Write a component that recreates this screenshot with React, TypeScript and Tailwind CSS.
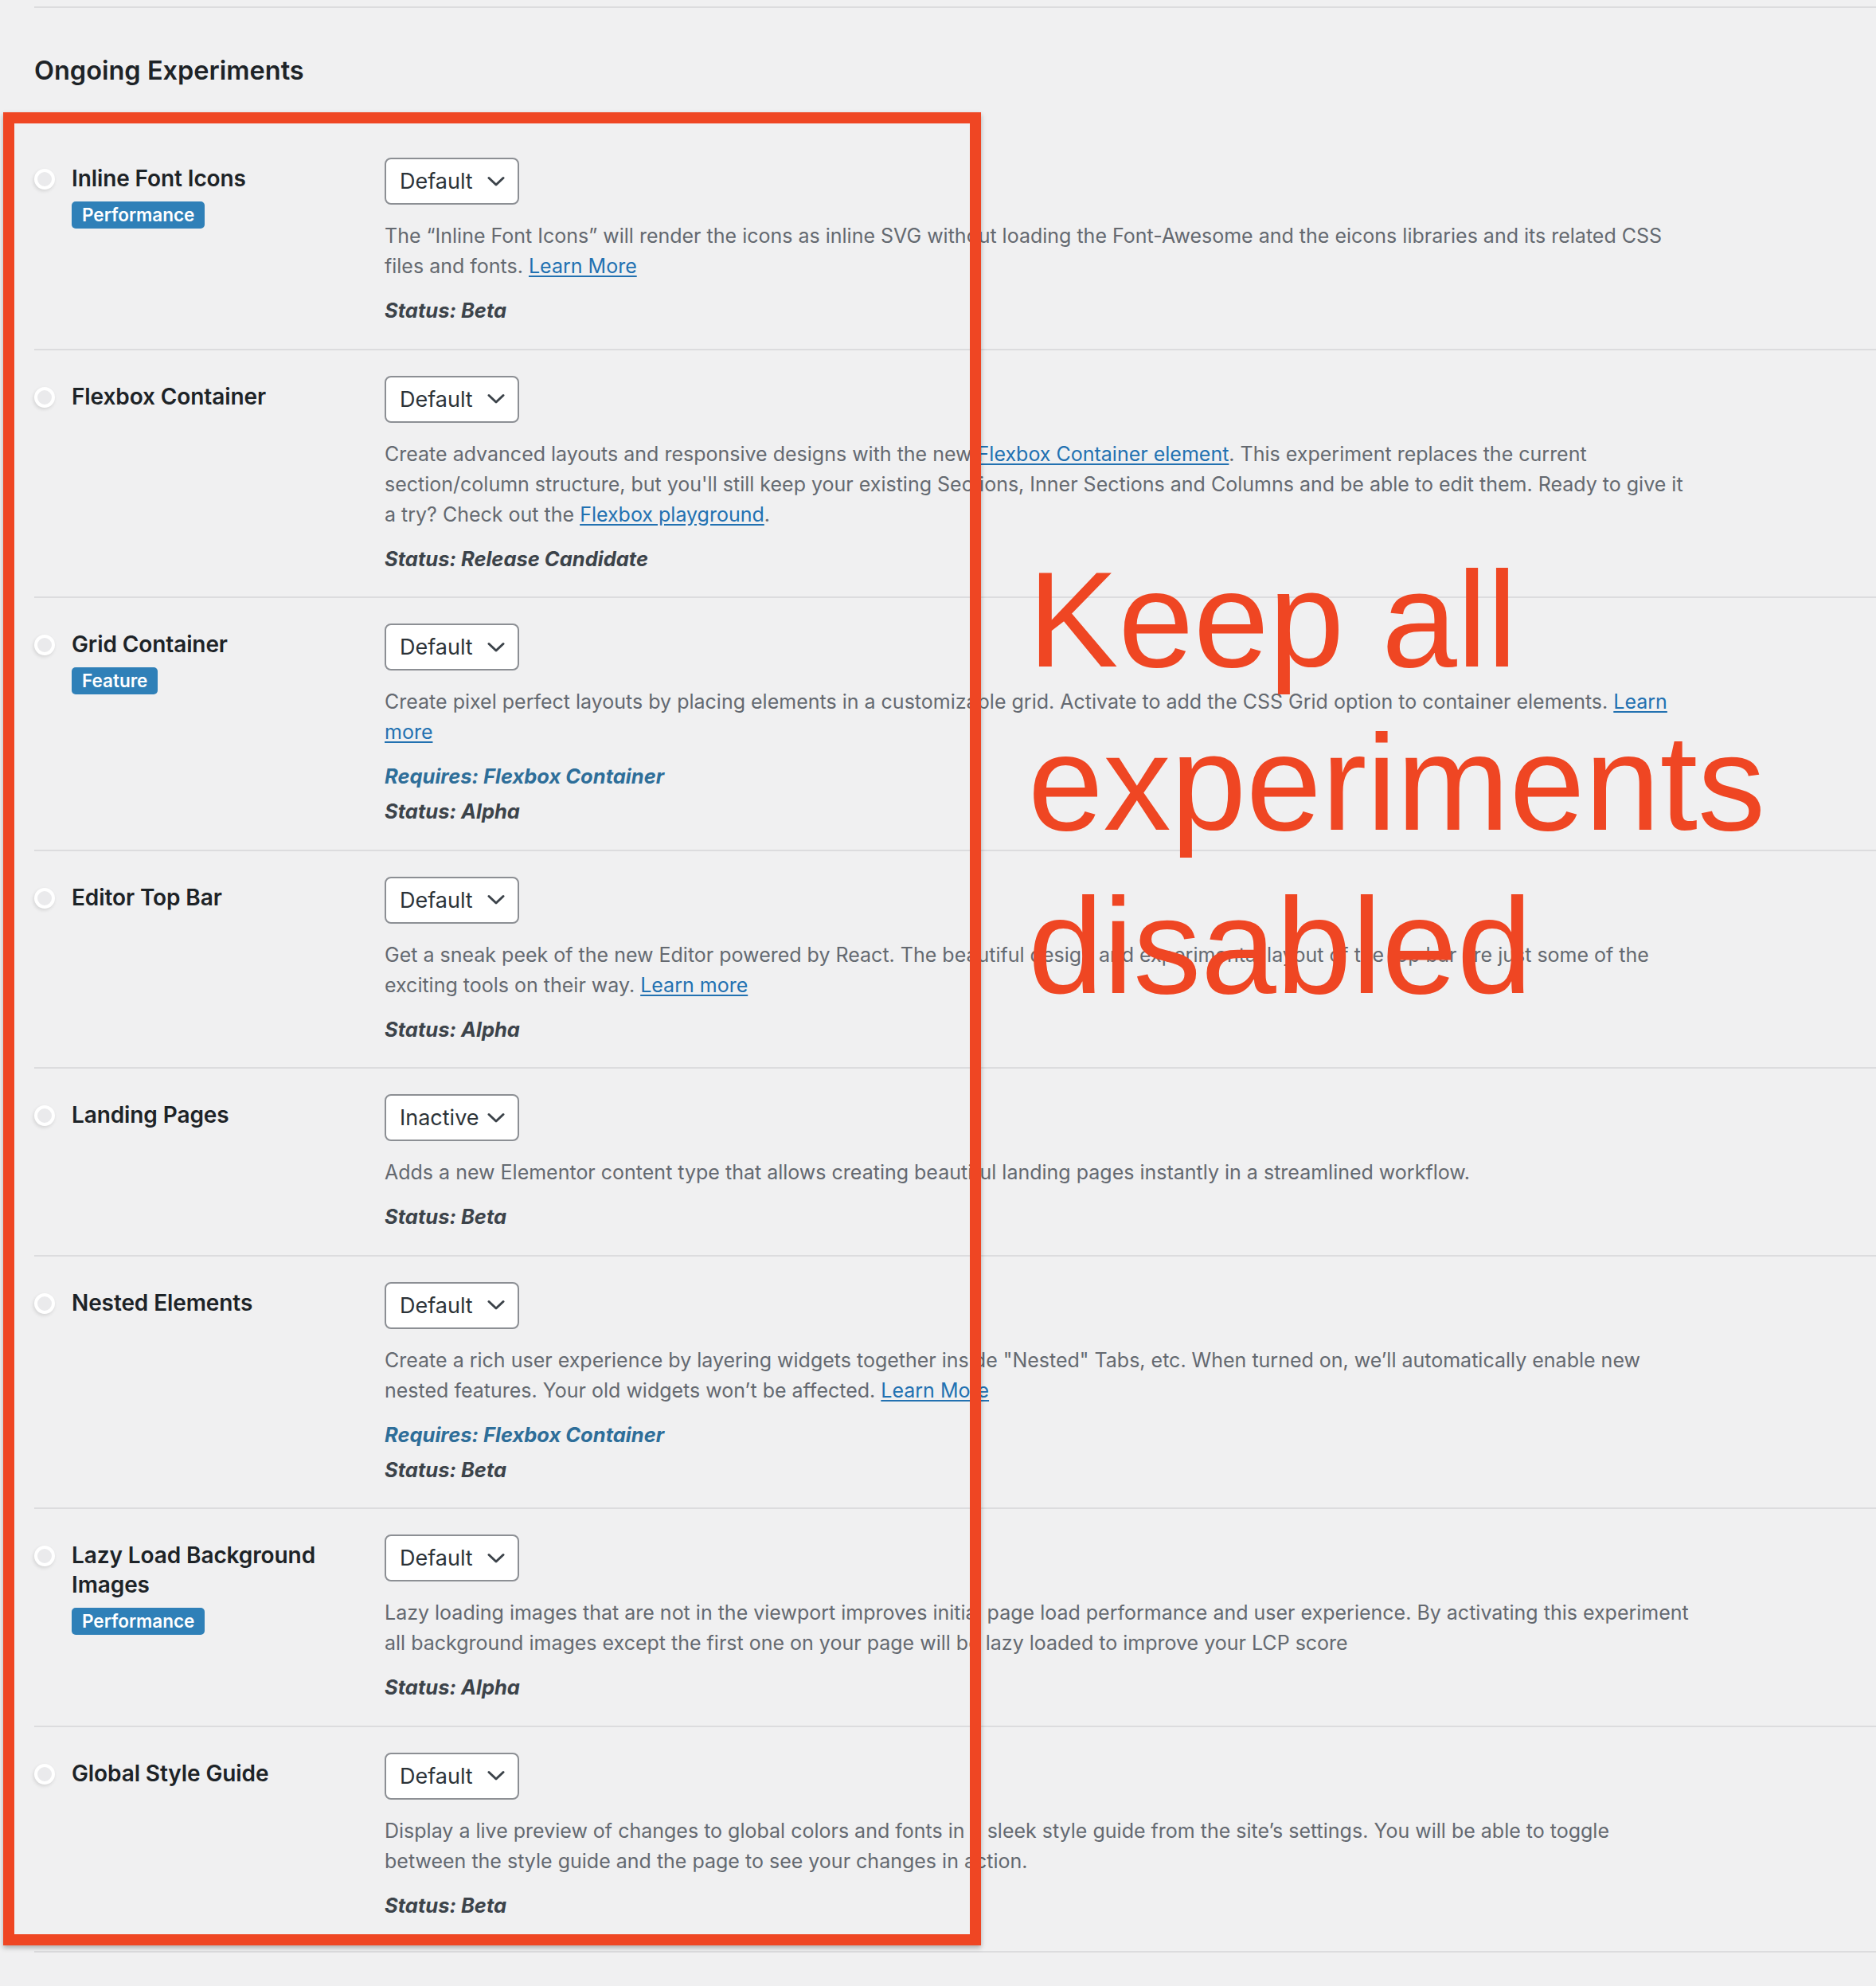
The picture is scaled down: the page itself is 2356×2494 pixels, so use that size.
import type { ReactNode } from "react";

type Experiment = {
  title: string;
  tag?: string;
  value: string;
  lines: ReactNode[];
  requires?: string;
  status: string;
};

function DocLink({ children }: { children: ReactNode }) {
  return (
    <a href="#" className="text-[#2271b1] underline underline-offset-[3px]">
      {children}
    </a>
  );
}

const experiments: Experiment[] = [
  {
    title: "Inline Font Icons",
    tag: "Performance",
    value: "Default",
    lines: [
      "The “Inline Font Icons” will render the icons as inline SVG without loading the Font-Awesome and the eicons libraries and its related CSS",
      <>
        files and fonts. <DocLink>Learn More</DocLink>
      </>,
    ],
    status: "Beta",
  },
  {
    title: "Flexbox Container",
    value: "Default",
    lines: [
      <>
        Create advanced layouts and responsive designs with the new{" "}
        <DocLink>Flexbox Container element</DocLink>. This experiment replaces the current
      </>,
      "section/column structure, but you'll still keep your existing Sections, Inner Sections and Columns and be able to edit them. Ready to give it",
      <>
        a try? Check out the <DocLink>Flexbox playground</DocLink>.
      </>,
    ],
    status: "Release Candidate",
  },
  {
    title: "Grid Container",
    tag: "Feature",
    value: "Default",
    lines: [
      <>
        Create pixel perfect layouts by placing elements in a customizable grid. Activate to add the CSS Grid option to container elements.{" "}
        <DocLink>Learn</DocLink>
      </>,
      <DocLink>more</DocLink>,
    ],
    requires: "Flexbox Container",
    status: "Alpha",
  },
  {
    title: "Editor Top Bar",
    value: "Default",
    lines: [
      "Get a sneak peek of the new Editor powered by React. The beautiful design and experimental layout of the top bar are just some of the",
      <>
        exciting tools on their way. <DocLink>Learn more</DocLink>
      </>,
    ],
    status: "Alpha",
  },
  {
    title: "Landing Pages",
    value: "Inactive",
    lines: [
      "Adds a new Elementor content type that allows creating beautiful landing pages instantly in a streamlined workflow.",
    ],
    status: "Beta",
  },
  {
    title: "Nested Elements",
    value: "Default",
    lines: [
      "Create a rich user experience by layering widgets together inside \"Nested\" Tabs, etc. When turned on, we’ll automatically enable new",
      <>
        nested features. Your old widgets won’t be affected. <DocLink>Learn More</DocLink>
      </>,
    ],
    requires: "Flexbox Container",
    status: "Beta",
  },
  {
    title: "Lazy Load Background Images",
    tag: "Performance",
    value: "Default",
    lines: [
      "Lazy loading images that are not in the viewport improves initial page load performance and user experience. By activating this experiment",
      "all background images except the first one on your page will be lazy loaded to improve your LCP score",
    ],
    status: "Alpha",
  },
  {
    title: "Global Style Guide",
    value: "Default",
    lines: [
      "Display a live preview of changes to global colors and fonts in a sleek style guide from the site’s settings. You will be able to toggle",
      "between the style guide and the page to see your changes in action.",
    ],
    status: "Beta",
  },
];

function StateSelect({ value }: { value: string }) {
  return (
    <div className="flex h-[59px] w-[169px] items-center justify-between rounded-[8px] border-2 border-[#8c8f94] bg-white pl-[17px] pr-[16px]">
      <span className="text-[27px] leading-none text-[#2c3338]">{value}</span>
      <svg width="22" height="14" viewBox="0 0 22 14" fill="none">
        <path
          d="M2 2.5l9 8.5 9-8.5"
          stroke="#3c434a"
          strokeWidth="3"
          strokeLinecap="round"
          strokeLinejoin="round"
        />
      </svg>
    </div>
  );
}

function ExperimentRow({
  experiment,
  last,
}: {
  experiment: Experiment;
  last: boolean;
}) {
  return (
    <div className="flex border-b-2 border-[#dcdcde]">
      <div className="flex w-[440px] shrink-0 gap-[21px] pt-[40px]">
        <span className="mt-[6px] block h-[26px] w-[26px] shrink-0 rounded-full border-[4px] border-white bg-[#eaeaec] shadow-[-1px_2px_4px_rgba(0,0,0,0.12)]" />
        <div className="w-[340px]">
          <div className="text-[28px] font-semibold leading-[37px] tracking-[-0.1px] text-[#1d2327]">
            {experiment.title}
          </div>
          {experiment.tag ? (
            <span className="mt-[10px] inline-flex h-[34px] items-center rounded-[5px] bg-[#2f80b8] px-[13px] text-[22.5px] font-semibold text-white">
              {experiment.tag}
            </span>
          ) : null}
        </div>
      </div>
      <div className={last ? "pb-[38px] pt-[32px]" : "pb-[28.5px] pt-[32px]"}>
        <StateSelect value={experiment.value} />
        <p className="mt-[20px] whitespace-nowrap text-[25px] leading-[38px] text-[#646970]">
          {experiment.lines.map((line, index) => (
            <span key={index} className="block">
              {line}
            </span>
          ))}
        </p>
        {experiment.requires ? (
          <div className="mt-[18px] text-[25.5px] font-bold italic leading-[38px] text-[#2e6e99]">
            Requires: {experiment.requires}
          </div>
        ) : null}
        <div
          className={
            experiment.requires
              ? "mt-[6px] text-[25.5px] font-bold italic leading-[38px] text-[#3c434a]"
              : "mt-[18px] text-[25.5px] font-bold italic leading-[38px] text-[#3c434a]"
          }
        >
          Status: {experiment.status}
        </div>
      </div>
    </div>
  );
}

export default function App() {
  return (
    <div className="relative min-h-[2494px] w-full overflow-hidden bg-[#f0f0f1] font-['Inter',sans-serif]">
      <div className="pl-[43px] pt-[8px]">
        <div className="h-[2px] bg-[#dcdcde]" />
        <h2 className="mt-[59px] text-[32.5px] font-semibold leading-[40px] text-[#1d2327]">
          Ongoing Experiments
        </h2>
        <div className="mt-[57px]">
          {experiments.map((experiment, index) => (
            <ExperimentRow
              key={experiment.title}
              experiment={experiment}
              last={index === experiments.length - 1}
            />
          ))}
        </div>
      </div>

      {/* annotation drawn over the page */}
      <div className="pointer-events-none absolute left-[4px] top-[141px] h-[2302px] w-[1228px] border-[14px] border-[#ef4623] shadow-[0_3px_6px_rgba(0,0,0,0.28)]" />
      <div className="pointer-events-none absolute left-[1291px] top-[676px] font-['Liberation_Sans',Arial,sans-serif] text-[170px] leading-[205px] text-[#ef4623]">
        Keep all
        <br />
        experiments
        <br />
        disabled
      </div>
    </div>
  );
}
